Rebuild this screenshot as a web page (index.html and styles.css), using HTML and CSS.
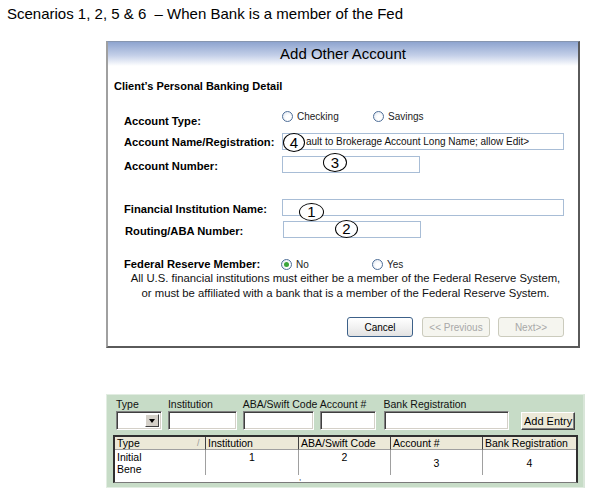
FILE: index.html
```html
<!DOCTYPE html>
<html lang="en">
<head>
    <meta charset="UTF-8">
    <title>Add Other Account</title>
    <link rel="stylesheet" href="styles.css">
</head>
<body>
    <p class="scenario">Scenarios 1, 2, 5 &amp; 6&nbsp; &ndash; When Bank is a member of the Fed</p>

    <div class="dialog">
        <div class="dialog-title">Add Other Account</div>
        <div class="dialog-body">
            <h2 class="section">Client&rsquo;s Personal Banking Detail</h2>

            <div class="row row-type">
                <label class="field-label">Account Type:</label>
                <div class="radios">
                    <span class="radio-opt"><span class="radio"></span>Checking</span>
                    <span class="radio-opt"><span class="radio"></span>Savings</span>
                </div>
            </div>

            <div class="row row-name">
                <label class="field-label">Account Name/Registration:</label>
                <div class="text w-long name-text">ault to Brokerage Account Long Name; allow Edit&gt;
                    <span class="callout c4">4</span>
                </div>
            </div>

            <div class="row row-number">
                <label class="field-label">Account Number:</label>
                <div class="text w-short">
                    <span class="callout c3">3</span>
                </div>
            </div>

            <div class="row row-fin">
                <label class="field-label">Financial Institution Name:</label>
                <div class="text w-fin">
                    <span class="callout c1">1</span>
                </div>
            </div>

            <div class="row row-routing">
                <label class="field-label">Routing/ABA Number:</label>
                <div class="text w-short">
                    <span class="callout c2">2</span>
                </div>
            </div>

            <div class="row row-fed">
                <label class="field-label">Federal Reserve Member:</label>
                <div class="radios">
                    <span class="radio-opt"><span class="radio on"></span>No</span>
                    <span class="radio-opt"><span class="radio"></span>Yes</span>
                </div>
            </div>

            <p class="note">All U.S. financial institutions must either be a member of the Federal Reserve System,<br>
            or must be affiliated with a bank that is a member of the Federal Reserve System.</p>

            <div class="buttons">
                <button class="btn">Cancel</button>
                <button class="btn disabled">&lt;&lt; Previous</button>
                <button class="btn disabled">Next&gt;&gt;</button>
            </div>
        </div>
    </div>

    <div class="panel">
        <div class="fields">
            <div class="fld f-type">
                <span>Type</span>
                <div class="win-input combo"><span class="drop"></span></div>
            </div>
            <div class="fld f-inst">
                <span>Institution</span>
                <div class="win-input"></div>
            </div>
            <div class="fld f-aba">
                <span>ABA/Swift Code</span>
                <div class="win-input"></div>
            </div>
            <div class="fld f-acct">
                <span>Account #</span>
                <div class="win-input"></div>
            </div>
            <div class="fld f-bank">
                <span>Bank Registration</span>
                <div class="win-input"></div>
            </div>
            <button class="win-btn">Add Entry</button>
        </div>

        <div class="grid">
            <div class="th">Type<span class="sort">/</span></div>
            <div class="th">Institution</div>
            <div class="th">ABA/Swift Code</div>
            <div class="th">Account #</div>
            <div class="th last">Bank Registration</div>

            <div class="td left">Initial<br>Bene</div>
            <div class="td">1</div>
            <div class="td">2<span class="tick">,</span></div>
            <div class="td mid">3</div>
            <div class="td mid last">4</div>
        </div>
    </div>
</body>
</html>
```

FILE: styles.css
```css
*{
    margin: 0;
    padding: 0;
    box-sizing: border-box;
}
body{
    font-family: "Liberation Sans", Arial, sans-serif;
    background-color: #fff;
    color: #000;
}
.scenario{
    font-size: 15px;
    line-height: 16px;
    padding: 6px 0 0 7px;
}

/* dialog */
.dialog{
    width: 474px;
    height: 307px;
    margin: 19px 0 0 106px;
    border-top: 1px solid #8796b0;
    border-left: 2px solid #a0a0a0;
    border-right: 2px solid #5a5a5a;
    border-bottom: 2px solid #5a5a5a;
}
.dialog-title{
    height: 24px;
    line-height: 24px;
    font-size: 15px;
    text-align: center;
    background: linear-gradient(#8ea4cf, #c3cfe8 55%, #fff);
}
.dialog-body{
    padding: 13px 14px 0 16px;
}
.section{
    font-size: 11px;
    line-height: 14px;
    font-weight: bold;
    margin-left: -10px;
}
.row{
    display: flex;
    align-items: center;
    height: 17px;
}
.field-label{
    width: 158px;
    flex-shrink: 0;
    font-size: 11.2px;
    font-weight: bold;
}
.row-type{ margin-top: 15px; }
.row-type .field-label{ margin-top: 8px; }
.row-name{ margin-top: 8px; }
.row-number{ margin-top: 6px; }
.row-number .field-label{ margin-top: 3px; }
.row-fin{ margin-top: 26px; }
.row-fin .field-label{ margin-top: 2px; }
.row-routing{ margin-top: 5px; margin-left: 1px; }
.row-routing .field-label{ margin-top: 3px; }
.row-fed{ margin-top: 19px; height: 14px; }
.row-fed .radios{ margin-left: -1px; }

.radios{
    display: flex;
}
.radio-opt{
    display: inline-flex;
    align-items: center;
    width: 91px;
    font-size: 10px;
    color: #222;
}
.radio{
    width: 11px;
    height: 11px;
    margin-right: 4px;
    border: 1px solid #4f6f98;
    border-radius: 50%;
    background: radial-gradient(circle at 60% 60%, #fff 30%, #d9e1ec);
    display: inline-flex;
    align-items: center;
    justify-content: center;
}
.radio.on::after{
    content: "";
    width: 5px;
    height: 5px;
    border-radius: 50%;
    background: #3aa43a;
}

.text{
    position: relative;
    height: 17px;
    border: 1px solid #a8bdd6;
    background-color: #fff;
    font-size: 10px;
    line-height: 15px;
    padding-left: 2px;
    color: #111;
    white-space: nowrap;
}
.name-text{ padding-left: 23px; }
.w-long{ width: 282px; }
.w-fin{ width: 284px; }
.w-short{ width: 138px; }

.callout{
    position: absolute;
    border: 1px solid #000;
    border-radius: 50%;
    background-color: #fff;
    font-size: 15px;
    line-height: 17px;
    text-align: center;
    color: #000;
}
.c4{ left: 0; top: -1px; width: 22px; height: 19px; }
.c3{ left: 40px; top: -4px; width: 24px; height: 19px; }
.c1{ left: 16px; top: 3px; width: 25px; height: 18px; line-height: 16px; }
.c2{ left: 51px; top: -2px; width: 23px; height: 18px; line-height: 16px; }

.note{
    font-size: 11.3px;
    line-height: 15px;
    text-align: center;
    padding-left: 3px;
    color: #111;
}
.buttons{
    display: flex;
    justify-content: flex-end;
    margin-top: 16px;
}
.btn{
    width: 66px;
    height: 20px;
    margin-left: 9px;
    font-family: "Liberation Sans", Arial, sans-serif;
    font-size: 10px;
    color: #000;
    border: 1px solid #3d6189;
    border-radius: 3px;
    background: linear-gradient(#fff, #f2f2f2 50%, #e2e2e2);
}
.btn.disabled{
    width: 68px;
    color: #a8a8a8;
    border-color: #cbcbbd;
    background: #f5f5ef;
}
.btn.disabled:last-child{
    width: 66px;
    margin-left: 8px;
}

/* grid panel */
.panel{
    width: 479px;
    height: 94px;
    margin: 46px 0 0 106px;
    padding: 3px 8px 0 9px;
    background-color: #c7dcc7;
    border: 1px solid #e2ede2;
    border-right: 2px solid #d9e6d9;
    font-size: 10.5px;
}
.fields{
    display: flex;
    align-items: flex-end;
}
.fld{
    display: flex;
    flex-direction: column;
    margin-right: 6px;
}
.fld span{
    line-height: 13px;
    height: 13px;
    white-space: nowrap;
    color: #111;
}
.f-type{ width: 46px; }
.f-inst{ width: 69px; }
.f-aba{ width: 71px; }
.f-acct{ width: 56px; margin-right: 8px; }
.f-bank{ width: 126px; margin-right: 12px; }
.win-input{
    height: 19px;
    background-color: #fff;
    border-top: 1px solid #808080;
    border-left: 1px solid #808080;
    border-bottom: 1px solid #fff;
    border-right: 1px solid #fff;
    box-shadow: inset 1px 1px #404040, inset -1px -1px #d4d0c8;
}
.combo{
    display: flex;
    justify-content: flex-end;
    align-items: center;
    padding-right: 2px;
}
.drop{
    width: 14px;
    height: 14px;
    background-color: #d4d0c8;
    border-top: 1px solid #fff;
    border-left: 1px solid #fff;
    border-right: 1px solid #404040;
    border-bottom: 1px solid #404040;
    position: relative;
}
.drop::after{
    content: "";
    position: absolute;
    left: 3px;
    top: 4px;
    border-left: 3.5px solid transparent;
    border-right: 3.5px solid transparent;
    border-top: 4px solid #000;
}
.win-btn{
    width: 54px;
    height: 18px;
    margin-bottom: 0;
    font-family: "Liberation Sans", Arial, sans-serif;
    font-size: 11px;
    color: #000;
    background-color: #ece9d8;
    border-top: 1px solid #fff;
    border-left: 1px solid #fff;
    border-right: 1px solid #404040;
    border-bottom: 1px solid #404040;
    box-shadow: inset -1px -1px #808080;
}
.grid{
    display: grid;
    grid-template-columns: 91px 93px 92px 92px 1fr;
    grid-template-rows: 13px 25px;
    width: 465px;
    height: 48px;
    margin: 5px 0 0 -3px;
    background-color: #fff;
    border: 2px solid #303030;
    border-bottom: 1px solid #7a7a7a;
}
.th{
    position: relative;
    background-color: #ece9d8;
    border-right: 1px solid #404040;
    border-bottom: 1px solid #a0a0a0;
    line-height: 12px;
    padding-left: 2px;
    white-space: nowrap;
    overflow: hidden;
}
.th.last{ border-right: none; }
.sort{
    position: absolute;
    left: 82px;
    top: 0;
    color: #999;
    font-size: 9px;
}
.td{
    position: relative;
    border-right: 1px solid #a0a0a0;
    line-height: 12px;
    text-align: center;
    padding-top: 1px;
}
.td.left{
    text-align: left;
    padding-left: 2px;
}
.td.mid{
    padding-top: 7px;
}
.td.last{ border-right: none; }
.tick{
    position: absolute;
    left: 0;
    top: 24px;
    font-size: 8px;
    line-height: 8px;
}
```
